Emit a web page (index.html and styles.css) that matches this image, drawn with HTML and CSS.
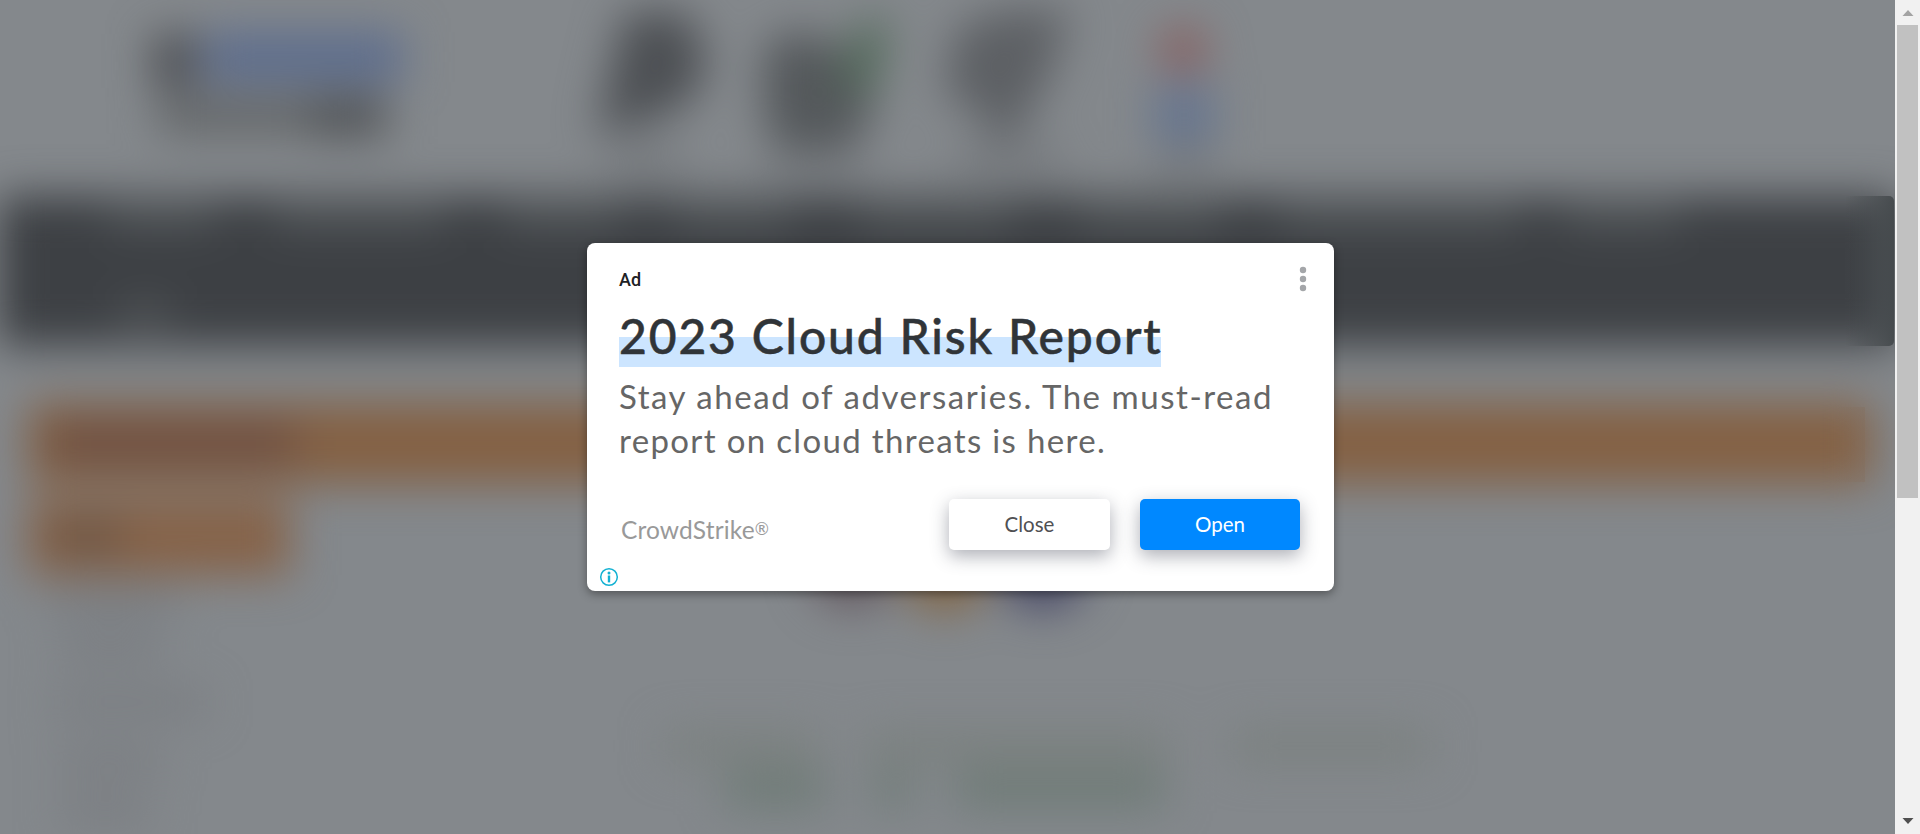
FILE: index.html
```html
<!DOCTYPE html>
<html lang="en">
<head>
<meta charset="utf-8">
<title>2023 Cloud Risk Report</title>
<link rel="stylesheet" href="styles.css">
</head>
<body>
<div class="screen">
  <main class="page">
    <svg class="backdrop" viewBox="0 0 1895 834" width="1895" height="834" aria-hidden="true">
      <defs>
        <filter id="soft" filterUnits="userSpaceOnUse" x="-80" y="-80" width="2060" height="1000" color-interpolation-filters="sRGB"><feGaussianBlur stdDeviation="22"/></filter>
        <linearGradient id="edge" x1="1845" x2="1894" y1="0" y2="0" gradientUnits="userSpaceOnUse">
          <stop offset="0" stop-color="#42474a" stop-opacity="0"/><stop offset="1" stop-color="#42474a" stop-opacity=".9"/>
        </linearGradient>
        <linearGradient id="amber" x1="1835" x2="1865" y1="0" y2="0" gradientUnits="userSpaceOnUse">
          <stop offset="0" stop-color="#84664f" stop-opacity="0"/><stop offset="1" stop-color="#84664f" stop-opacity=".22"/>
        </linearGradient>
      </defs>
      <rect width="1895" height="834" fill="#84888c"/>
      <g filter="url(#soft)">
        <rect x="153" y="34" width="42" height="54" fill="#4b4d51"/>
        <rect x="203" y="32" width="200" height="50" fill="#5d6d8d"/>
        <rect x="158" y="96" width="160" height="38" fill="#636668"/>
        <rect x="310" y="95" width="76" height="42" fill="#505356"/>
        <path d="M625 12H685L706 50L700 90L665 115L597 135L612 65Z" fill="#4d5054"/>
        <path d="M764 45L800 30L870 60V120L850 146H775L764 110Z" fill="#54585b"/>
        <path d="M835 85L860 20H890L876 95Z" fill="#526a5a"/>
        <path d="M955 30L1000 10H1070L1050 75L1015 138H990L980 112L945 95Z" fill="#5d6064"/>
        <path d="M610 158H680M770 158H860M960 158H1060M1160 158H1210" stroke="#66696d" stroke-width="14"/>
        <circle cx="1183" cy="50" r="23" fill="#885c5c"/>
        <rect x="1154" y="84" width="60" height="58" fill="#66758f"/>
        <rect x="-2" y="196" width="1899" height="150" rx="5" fill="#3d4044"/>
        <path d="M108 216H216M275 216H445M505 216H620M675 216H790M860 216H1010M1080 216H1220M1280 216H1520M1565 216H1680" stroke="#5f6466" stroke-width="16"/>
        <path d="M120 315H170" stroke="#606466" stroke-width="16"/>
        <rect x="28" y="403" width="1844" height="81" fill="#846144"/>
        <rect x="52" y="424" width="243" height="38" fill="#6d4f43"/>
        <rect x="28" y="499" width="262" height="76" fill="#866349"/>
        <rect x="55" y="520" width="65" height="34" fill="#6d5544"/>
        <path d="M50 600H175M60 647H160M55 703H205M60 760H160M60 810H150" stroke="#787b7f" stroke-width="24"/>
        <circle cx="852" cy="565" r="42" fill="#655a61"/>
        <circle cx="945" cy="569" r="43" fill="#836747"/>
        <circle cx="1043" cy="565" r="45" fill="#4b4c69"/>
        <path d="M665 746H820M865 746H1170M1230 746H1430" stroke="#7a807e" stroke-width="30"/>
        <path d="M725 789H825M875 789H910M955 789H1165" stroke="#6d7a75" stroke-width="36"/>
      </g>
      <rect x="1840" y="196" width="54" height="150" rx="5" fill="url(#edge)"/>
      <rect x="1835" y="407" width="30" height="75" fill="url(#amber)"/>
    </svg>
    <article class="ad">
      <header class="ad-head">
        <span class="ad-label">Ad</span>
        <svg class="menu" width="8" height="26" viewBox="0 0 8 26" fill="#a4a6a9"><circle cx="4" cy="4" r="3.2"/><circle cx="4" cy="13" r="3.2"/><circle cx="4" cy="22" r="3.2"/></svg>
      </header>
      <h1 class="title">2023 Cloud Risk Report</h1>
      <p class="copy"><span class="line line-one">Stay ahead of adversaries. The must-read</span><br><span class="line line-two">report on cloud threats is here.</span></p>
      <footer class="ad-foot">
        <span class="brand">CrowdStrike<span class="reg">®</span></span>
        <div class="actions">
          <button class="btn btn-close" type="button">Close</button>
          <button class="btn btn-open" type="button">Open</button>
        </div>
      </footer>
      <svg class="info" width="20" height="20" viewBox="0 0 20 20"><circle cx="10" cy="10" r="8.3" fill="none" stroke="#13b1d2" stroke-width="1.5"/><circle cx="10" cy="5.9" r="1.5" fill="#13b1d2"/><path d="M8.8 8.5h2.4v6.9h-2.4z" fill="#13b1d2"/></svg>
    </article>
  </main>
  <aside class="scrollbar">
    <svg class="arrow" width="12" height="7" viewBox="0 0 12 7"><path d="M6 0L11.5 6H.5Z" fill="#a3a3a3"/></svg>
    <div class="thumb"></div>
    <svg class="arrow arrow-down" width="12" height="7" viewBox="0 0 12 7"><path d="M.5 1H11.5L6 7Z" fill="#505050"/></svg>
  </aside>
</div>
</body>
</html>
```

FILE: styles.css
```css
* { box-sizing: border-box; }
body { margin: 0; overflow: hidden; font-family: Lato, "Open Sans", sans-serif; }
.screen { display: flex; width: 1920px; height: 834px; }
.page { position: relative; width: 1895px; height: 834px; padding: 243px 0 0 587px; }
.backdrop { position: absolute; inset: 0; display: block; }
.ad {
  position: relative; width: 747px; height: 348px; padding: 23px 27px 0 32px;
  background: #fff; border-radius: 8px;
  box-shadow: 0 3px 10px rgba(0, 0, 0, .38);
}
.ad-head { display: flex; justify-content: space-between; height: 45px; }
.ad-label { font: 500 18px/28px Roboto, sans-serif; color: #202124; }
.title {
  width: 542px; height: 60px; margin: 0;
  font-size: 48px; line-height: 50px; font-weight: 500; letter-spacing: 1.85px; white-space: nowrap;
  color: #303438; -webkit-text-stroke: .5px #303438;
  background: linear-gradient(#cce5ff, #cce5ff) 0 26px / 100% 30px no-repeat;
}
.copy { margin: 3px 0 0; font-size: 33px; line-height: 44px; color: #666; white-space: nowrap; }
.line-one { letter-spacing: 1.54px; }
.line-two { letter-spacing: 1.34px; }
.ad-foot { display: flex; justify-content: space-between; margin-top: 37px; padding-right: 7px; }
.brand { padding: 16px 0 0 2px; font-size: 24.5px; line-height: 30px; font-weight: 400; letter-spacing: .15px; color: #999; white-space: nowrap; }
.reg { position: relative; top: -4px; font-size: 17px; }
.actions { display: flex; gap: 30px; }
.btn {
  width: 160px; height: 51px; padding: 0; border: 0; border-radius: 5px;
  font: 400 20.5px/51px Lato, sans-serif;
  box-shadow: 0 6px 18px rgba(60, 64, 82, .42);
}
.btn-close { width: 161px; background: #fff; color: #505053; }
.btn-open { background: #08f; color: #fff; }
.info { position: absolute; left: 12px; bottom: 4px; }
.scrollbar { display: flex; flex-direction: column; align-items: center; width: 25px; height: 834px; padding: 10px 0; background: #f1f1f1; }
.arrow { display: block; flex: none; }
.thumb { width: 21px; height: 473px; margin-top: 8px; background: #c1c1c1; }
.arrow-down { margin-top: auto; }
```
